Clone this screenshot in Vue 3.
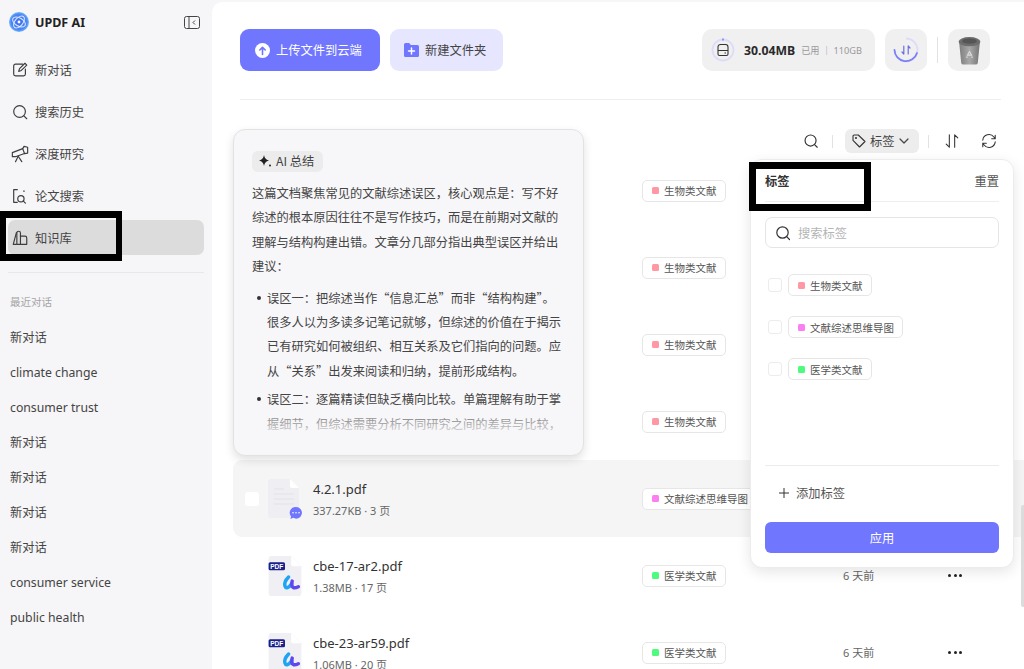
<script setup>
const navItems = [
  { id: 'chat', label: '新对话', paths: ['M13 3.5H5a2 2 0 0 0-2 2v9a2 2 0 0 0 2 2h9a2 2 0 0 0 2-2V9', 'M8.5 11.5l1-3L15.5 2.5l2 2-6 6z'] },
  { id: 'history', label: '搜索历史', paths: ['M9.5 3a6.5 6.5 0 1 0 0 13 6.5 6.5 0 0 0 0-13z', 'M14.3 14.3l3.2 3.2'] },
  { id: 'research', label: '深度研究', paths: ['M1.500 8.500l11.500-4.500 2 5.500-10 3.500H1.500z', 'M13 4l1.500-2.500 4 1v6.500l-3.500 .5', 'M8 12.500L5 18.500', 'M8 12.500L12 18.500'] },
  { id: 'paper', label: '论文搜索', paths: ['M7 3H3v14h4', 'M11 9.500a3.500 3.500 0 1 0 0 7 3.500 3.500 0 0 0 0-7z', 'M13.500 15.500l2.500 2.500', 'M14 4.500h.8'] },
  { id: 'library', label: '知识库', active: true, paths: ['M6 4L2.500 17H6', 'M6.500 17V4.500a2 2 0 0 1 4 0V17z', 'M10.500 8h5a2 2 0 0 1 2 2v7h-7'] }
]

const recents = ['新对话', 'climate change', 'consumer trust', '新对话', '新对话', '新对话', '新对话', 'consumer service', 'public health']

const bio = { name: '生物类文献', color: '#ff98a3' }
const mind = { name: '文献综述思维导图', color: '#fb7ff0' }
const med = { name: '医学类文献', color: '#4efb7c' }
const tagOptions = [bio, mind, med]

const files = [
  { id: 1, tag: bio },
  { id: 2, tag: bio },
  { id: 3, tag: bio },
  { id: 4, tag: bio },
  { id: 5, name: '4.2.1.pdf', meta: '337.27KB · 3 页', tag: mind, kind: 'doc', hover: true },
  { id: 6, name: 'cbe-17-ar2.pdf', meta: '1.38MB · 17 页', tag: med, kind: 'pdf', time: '6 天前' },
  { id: 7, name: 'cbe-23-ar59.pdf', meta: '1.06MB · 20 页', tag: med, kind: 'pdf', time: '6 天前' }
]
</script>

<template>
  <div class="app">
    <aside class="sidebar">
      <div class="brand">
        <svg class="logo" viewBox="0 0 20 20">
          <defs>
            <radialGradient id="logoFill" cx="50%" cy="50%" r="55%">
              <stop offset="0" stop-color="#3f6cf0" />
              <stop offset="0.7" stop-color="#4a86f5" />
              <stop offset="1" stop-color="#7fd0fb" />
            </radialGradient>
          </defs>
          <circle cx="10" cy="10" r="10" fill="url(#logoFill)" />
          <ellipse cx="10" cy="10" rx="7" ry="4" transform="rotate(30 10 10)" fill="none" stroke="#dfeaff" stroke-width="1" />
          <ellipse cx="10" cy="10" rx="7" ry="4" transform="rotate(-50 10 10)" fill="none" stroke="#dfeaff" stroke-width="1" />
          <circle cx="10" cy="10" r="1.400" fill="#fff" />
        </svg>
        <span class="brand-name">UPDF AI</span>
        <svg class="collapse" viewBox="0 0 16 13" fill="none" stroke="#444" stroke-width="1">
          <rect x="0.500" y="0.500" width="15" height="12" rx="2" />
          <path d="M5 0.500v12" />
          <path d="M11 4.500L9 6.500l2 2" />
        </svg>
      </div>

      <nav class="nav">
        <div v-for="item in navItems" :key="item.id" class="nav-item" :class="{ active: item.active }">
          <svg class="nav-icon" viewBox="0 0 20 20" fill="none" stroke="#3d3d3d" stroke-width="1.300" stroke-linecap="round" stroke-linejoin="round">
            <path v-for="d in item.paths" :key="d" :d="d" />
          </svg>
          <span>{{ item.label }}</span>
        </div>
      </nav>

      <div class="side-line"></div>
      <div class="recent-title">最近对话</div>
      <div v-for="(text, i) in recents" :key="i" class="recent-item">{{ text }}</div>
    </aside>

    <main class="main">
      <div class="topbar">
        <div class="top-left">
          <button class="btn-upload">
            <svg width="15" height="15" viewBox="0 0 15 15">
              <circle cx="7.500" cy="7.500" r="7.500" fill="#fff" />
              <path d="M7.500 11.500V4.500M4.800 7l2.700-2.700L10.200 7" fill="none" stroke="#7176ff" stroke-width="1.600" stroke-linecap="round" stroke-linejoin="round" />
            </svg>
            上传文件到云端
          </button>
          <button class="btn-folder">
            <svg width="15" height="14" viewBox="0 0 15 14">
              <path d="M0 1.500A1.500 1.500 0 0 1 1.500 0h3.700l1.600 2h6.700A1.500 1.500 0 0 1 15 3.500v9a1.500 1.500 0 0 1-1.500 1.500h-12A1.500 1.500 0 0 1 0 12.500z" fill="#7176ff" />
              <path d="M7.500 5v6M4.500 8h6" stroke="#fff" stroke-width="1.500" stroke-linecap="round" />
            </svg>
            新建文件夹
          </button>
        </div>
        <div class="top-right">
          <div class="storage">
            <svg width="24" height="24" viewBox="0 0 24 24" fill="none">
              <circle cx="12" cy="12" r="10.500" stroke="#dcdcfa" stroke-width="1.800" />
              <path d="M11.300 1.500h1.400" stroke="#7176ff" stroke-width="1.800" />
              <path d="M9.500 6.500h5a2.500 2.500 0 0 1 2.500 2.500v7a1.500 1.500 0 0 1-1.500 1.500h-7A1.500 1.500 0 0 1 7 16V9a2.500 2.500 0 0 1 2.500-2.500zM7 12.500h10" stroke="#333" stroke-width="1.100" />
              <path d="M13.500 15h1.500" stroke="#333" stroke-width="1.100" />
            </svg>
            <span class="used">30.04MB</span>
            <span class="quota">已用 ｜ 110GB</span>
          </div>
          <div class="tile">
            <svg width="26" height="26" viewBox="0 0 26 26" fill="none">
              <path d="M13 1.500A11.500 11.500 0 1 1 1.500 13" stroke="#dcdcfa" stroke-width="1.800" />
              <path d="M1.500 13A11.500 11.500 0 0 0 24 16" stroke="#7c80f5" stroke-width="1.800" stroke-linecap="round" />
              <path d="M10.800 9v8M10.800 17l-1.800-2M15.200 17V9M15.200 9l1.800 2" stroke="#6a6ee0" stroke-width="1.200" stroke-linecap="round" stroke-linejoin="round" />
            </svg>
          </div>
          <span class="top-sep"></span>
          <div class="tile">
            <svg width="25" height="29" viewBox="0 0 24 28">
              <defs>
                <linearGradient id="binFill" x1="0" x2="1" y1="0" y2="0">
                  <stop offset="0" stop-color="#7e7e7e" />
                  <stop offset="0.5" stop-color="#a8a8a8" />
                  <stop offset="1" stop-color="#757575" />
                </linearGradient>
              </defs>
              <path d="M2 6h20l-2 20a2 2 0 0 1-2 1.500H6A2 2 0 0 1 4 26z" fill="url(#binFill)" />
              <ellipse cx="12" cy="5.500" rx="10.500" ry="4.500" fill="#6d6d6d" />
              <ellipse cx="12" cy="5" rx="7" ry="2.500" fill="#555" />
              <path d="M12 15l2 3.500h-4zM8.500 20.500l2-.2M15.500 20.500l-2-.2" fill="none" stroke="#ddd" stroke-width="1.100" />
            </svg>
          </div>
        </div>
      </div>

      <div class="top-line"></div>

      <div class="toolbar">
        <svg class="tool-icon" viewBox="0 0 18 18" fill="none" stroke="#333" stroke-width="1.300" stroke-linecap="round">
          <circle cx="8.500" cy="8.500" r="6.200" />
          <path d="M13 13l3 3" />
        </svg>
        <span class="tool-sep"></span>
        <div class="tag-filter">
          <svg width="14" height="14" viewBox="0 0 14 14" fill="none" stroke="#333" stroke-width="1.100" stroke-linejoin="round">
            <path d="M1 2.300A1.300 1.300 0 0 1 2.300 1h4L13 7.500 7.500 13 1 6.300z" />
            <circle cx="4" cy="4" r="0.500" />
          </svg>
          <span>标签</span>
          <svg width="10" height="6" viewBox="0 0 10 6" fill="none" stroke="#444" stroke-width="1.200" stroke-linecap="round" stroke-linejoin="round">
            <path d="M1 1l4 4 4-4" />
          </svg>
        </div>
        <span class="tool-sep second"></span>
        <svg class="tool-icon sort" viewBox="0 0 18 18" fill="none" stroke="#333" stroke-width="1.200" stroke-linecap="round" stroke-linejoin="round">
          <path d="M6 2v14M6 16l-3.500-3.500M12 16V2M12 2l3.500 3.500" />
        </svg>
        <svg class="tool-icon" viewBox="0 0 18 18" fill="none" stroke="#333" stroke-width="1.200" stroke-linecap="round" stroke-linejoin="round">
          <path d="M2 8a7 7 0 0 1 12.500-3.500L16 6.500M16 2.500v4h-4" />
          <path d="M16 10a7 7 0 0 1-12.500 3.500L2 11.500M2 15.500v-4h4" />
        </svg>
      </div>

      <div class="file-list">
        <div v-for="file in files" :key="file.id" class="file-row" :class="{ hover: file.hover }">
          <div class="check-cell"><span v-if="file.hover" class="row-check"></span></div>
          <div class="file-cell">
            <svg v-if="file.kind === 'doc'" class="file-icon" viewBox="0 0 34 40">
              <path d="M3 0h19l9 9v27a3 3 0 0 1-3 3H3a3 3 0 0 1-3-3V3a3 3 0 0 1 3-3z" fill="#efeef2" />
              <path d="M22 0l9 9h-7a2 2 0 0 1-2-2z" fill="#fff" />
              <path d="M6 10h10M6 15h20M6 20h20M6 25h20" stroke="#e3e2e6" stroke-width="1" />
              <g transform="translate(-1 0)">
                <path d="M29 28a5.800 5.800 0 1 1-2.800 10.800c-1 .7-2 .9-3 .9.500-.6.800-1.300.9-2.200A5.800 5.800 0 0 1 29 28z" fill="#7176ff" />
                <circle cx="26" cy="33.700" r="0.800" fill="#fff" />
                <circle cx="29" cy="33.700" r="0.800" fill="#fff" />
                <circle cx="32" cy="33.700" r="0.800" fill="#fff" />
              </g>
            </svg>
            <svg v-else-if="file.kind === 'pdf'" class="file-icon" viewBox="0 0 32 39">
              <path d="M3 0h19l10 10v26a3 3 0 0 1-3 3H3a3 3 0 0 1-3-3V3a3 3 0 0 1 3-3z" fill="#f0eff3" />
              <path d="M22 0l10 10h-8a2 2 0 0 1-2-2z" fill="#fff" />
              <rect x="0" y="6" width="16" height="8" rx="1.500" fill="#1a1f8a" />
              <text x="8" y="12.400" class="pdf-mark">PDF</text>
              <path d="M19.500 20.500c-2.500 2.500-4.500 6-3.500 9 .8 2.300 3.500 2 6.500-2.500" fill="none" stroke="#1ea4f2" stroke-width="3.400" stroke-linecap="round" stroke-linejoin="round" />
              <path d="M23 24.500c-.8 3-.5 6 1.500 6.500 1.500.3 3-.3 4.500-1" fill="none" stroke="#5f46ee" stroke-width="3.400" stroke-linecap="round" stroke-linejoin="round" />
            </svg>
            <div v-if="file.name" class="file-text">
              <div class="file-name">{{ file.name }}</div>
              <div class="file-meta">{{ file.meta }}</div>
            </div>
          </div>
          <div class="tag-cell">
            <span class="tag">
              <i class="tag-dot" :style="{ background: file.tag.color }"></i>{{ file.tag.name }}
            </span>
          </div>
          <div class="time-cell">{{ file.time }}</div>
          <div class="more-cell">
            <span v-if="file.time" class="more"><i></i><i></i><i></i></span>
          </div>
        </div>
      </div>

      <section class="summary">
        <div class="summary-chip">
          <svg width="14" height="14" viewBox="0 0 14 14" fill="#222">
            <path d="M6 1c.5 3 1.800 4.600 5 5.500-3.200.9-4.500 2.500-5 5.500-.5-3-1.800-4.600-5-5.500C4.200 5.600 5.500 4 6 1z" />
            <circle cx="12" cy="11.500" r="1" />
          </svg>
          <span>AI 总结</span>
        </div>
        <div class="summary-body">
          <p>这篇文档聚焦常见的文献综述误区，核心观点是：写不好综述的根本原因往往不是写作技巧，而是在前期对文献的理解与结构构建出错。文章分几部分指出典型误区并给出建议：</p>
          <ul>
            <li>误区一：把综述当作“信息汇总”而非“结构构建”。很多人以为多读多记笔记就够，但综述的价值在于揭示已有研究如何被组织、相互关系及它们指向的问题。应从“关系”出发来阅读和归纳，提前形成结构。</li>
            <li>误区二：逐篇精读但缺乏横向比较。单篇理解有助于掌握细节，但综述需要分析不同研究之间的差异与比较，</li>
          </ul>
          <div class="summary-fade"></div>
        </div>
      </section>

      <section class="tag-panel">
        <div class="panel-head">
          <strong>标签</strong>
          <span class="reset">重置</span>
        </div>
        <div class="panel-search">
          <svg width="16" height="16" viewBox="0 0 16 16" fill="none" stroke="#333" stroke-width="1.200" stroke-linecap="round">
            <circle cx="7.500" cy="7.500" r="5.700" />
            <path d="M11.700 11.700l2.800 2.800" />
          </svg>
          <span>搜索标签</span>
        </div>
        <div class="panel-options">
          <div v-for="opt in tagOptions" :key="opt.name" class="panel-option">
            <span class="opt-check"></span>
            <span class="tag">
              <i class="tag-dot" :style="{ background: opt.color }"></i>{{ opt.name }}
            </span>
          </div>
        </div>
        <div class="panel-foot">
          <div class="add-tag">
            <svg width="10" height="10" viewBox="0 0 10 10" stroke="#333" stroke-width="1">
              <path d="M5 0v10M0 5h10" />
            </svg>
            添加标签
          </div>
          <button class="apply">应用</button>
        </div>
      </section>

      <span class="scroll-thumb"></span>
    </main>

    <!-- black marks drawn over the capture -->
    <span class="mark mark-nav"></span>
    <span class="mark mark-panel"></span>
  </div>
</template>

<style>
html,
body {
  margin: 0;
  overflow: hidden;
  background: #f6f5f7;
}
</style>

<style scoped>
.app {
  position: relative;
  display: flex;
  width: 1024px;
  height: 669px;
  overflow: hidden;
  background: #f6f5f7;
  color: #333;
  font-family: "Noto Sans", "Noto Sans CJK SC", sans-serif;
}

/* sidebar */
.sidebar {
  flex: none;
  box-sizing: border-box;
  width: 212px;
  padding: 0 8px;
}

.brand {
  display: flex;
  align-items: center;
  height: 44px;
}

.logo {
  width: 20px;
  height: 20px;
  margin-left: 1px;
}

.brand-name {
  margin-left: 6px;
  font-size: 12.5px;
  font-weight: 700;
  color: #222;
}

.collapse {
  width: 16px;
  height: 13px;
  margin-left: auto;
  margin-right: 4px;
}

.nav {
  display: flex;
  flex-direction: column;
  gap: 7px;
  margin-top: 8px;
}

.nav-item {
  display: flex;
  align-items: center;
  gap: 6px;
  height: 35px;
  padding-left: 3px;
  border-radius: 7px;
  font-size: 12.25px;
  color: #444;
}

.nav-item.active {
  background: #dcdcdc;
}

.nav-icon {
  width: 18px;
  height: 18px;
}

.side-line {
  height: 1px;
  margin-top: 17px;
  background: #e8e7ea;
}

.recent-title {
  margin-top: 21px;
  margin-left: 2px;
  height: 16px;
  line-height: 16px;
  font-size: 10.5px;
  color: #a5a5a5;
}

.recent-item {
  height: 35px;
  margin-left: 2px;
  line-height: 35px;
  font-size: 12.25px;
  color: #444;
}

.recent-title + .recent-item {
  margin-top: 10px;
}

/* main area */
.main {
  position: relative;
  flex: 1;
  box-sizing: border-box;
  height: 667px;
  margin-top: 2px;
  padding: 27px 23px 0 28px;
  overflow: hidden;
  background: #fff;
  border-radius: 10px 0 0 0;
}

.topbar {
  display: flex;
  justify-content: space-between;
  height: 42px;
}

.top-left,
.top-right {
  display: flex;
  align-items: center;
  gap: 10px;
}

.top-right {
  margin-right: 11px;
}

.btn-upload,
.btn-folder {
  display: flex;
  align-items: center;
  height: 42px;
  border: 0;
  border-radius: 9px;
  font-family: inherit;
  font-size: 12.25px;
}

.btn-upload {
  gap: 6px;
  width: 140px;
  padding: 0 0 0 15px;
  background: #7176ff;
  color: #fff;
}

.btn-folder {
  gap: 6px;
  width: 113px;
  padding: 0 0 0 14px;
  background: #e6e6ff;
  color: #444;
}

.storage {
  display: flex;
  align-items: center;
  box-sizing: border-box;
  width: 173px;
  height: 42px;
  padding-left: 9px;
  border-radius: 10px;
  background: #f1f0f1;
}

.used {
  margin-left: 9px;
  font-size: 12.25px;
  font-weight: 700;
  color: #2a2a2a;
}

.quota {
  margin-left: 6px;
  font-size: 9.2px;
  color: #9a9a9a;
}

.tile {
  display: flex;
  align-items: center;
  justify-content: center;
  width: 42px;
  height: 42px;
  border-radius: 10px;
  background: #f1f0f1;
}

.top-sep {
  width: 1px;
  height: 26px;
  background: #e2e2e2;
}

.top-line {
  height: 1px;
  margin-top: 28px;
  background: #eeeeee;
}

.toolbar {
  display: flex;
  align-items: center;
  justify-content: flex-end;
  height: 24px;
  margin-top: 29px;
  padding-right: 4px;
}

.tool-icon {
  width: 16px;
  height: 16px;
}

.tool-sep {
  width: 1px;
  height: 13px;
  margin: 0 12px 0 13px;
  background: #e2e2e2;
}

.tool-sep.second {
  margin: 0 15px 0 9px;
}

.tool-icon.sort {
  margin-right: 21px;
}

.tag-filter {
  display: flex;
  align-items: center;
  gap: 4px;
  box-sizing: border-box;
  width: 74px;
  height: 24px;
  padding-left: 7px;
  border-radius: 6px;
  background: #ededed;
  font-size: 12.25px;
  color: #444;
}

.file-list {
  margin-top: -1px;
  margin-left: -7px;
  margin-right: -23px;
}

.file-row {
  display: grid;
  grid-template-columns: 35px 374px 201px 105px 1fr;
  align-items: center;
  height: 77px;
  border-radius: 9px 0 0 9px;
}

.file-row.hover {
  background: #f5f5f6;
}

.check-cell {
  display: flex;
  padding-left: 12px;
}

.row-check {
  width: 14px;
  height: 14px;
  border-radius: 3px;
  background: #fff;
}

.file-cell {
  display: flex;
  align-items: center;
  gap: 11px;
}

.file-icon {
  flex: none;
  width: 34px;
  height: 40px;
  overflow: visible;
}

.pdf-mark {
  fill: #fff;
  font-family: "Liberation Sans", sans-serif;
  font-size: 6.400px;
  font-weight: 700;
  text-anchor: middle;
}

.file-name {
  font-size: 13px;
  line-height: 20px;
  color: #333;
}

.file-meta {
  margin-top: 4px;
  font-size: 11px;
  line-height: 16px;
  color: #666;
}

.tag {
  display: inline-flex;
  align-items: center;
  gap: 5px;
  box-sizing: border-box;
  height: 22px;
  padding: 0 8px 0 9px;
  border: 1px solid #e6e6e6;
  border-radius: 5px;
  background: #fff;
  font-size: 10.500px;
  white-space: nowrap;
  color: #555;
}

.tag-dot {
  width: 7px;
  height: 7px;
  border-radius: 1.500px;
}

.tag-cell {
  display: flex;
}

.time-cell {
  margin-top: -1px;
  font-size: 11px;
  color: #666;
}

.more {
  display: flex;
  gap: 2.500px;
  margin-top: -1px;
}

.more i {
  width: 3px;
  height: 3px;
  border-radius: 50%;
  background: #222;
}

/* ai summary popover */
.summary {
  position: absolute;
  top: 127px;
  left: 21px;
  box-sizing: border-box;
  width: 351px;
  height: 327px;
  padding: 19px 21px 20px 18px;
  border: 1px solid #e2e2e2;
  border-radius: 12px;
  background: #f7f6f8;
  box-shadow: 0 4px 10px rgba(0, 0, 0, 0.12);
  font-family: "Noto Sans CJK SC", sans-serif;
}

.summary-chip {
  display: inline-flex;
  align-items: center;
  gap: 4px;
  box-sizing: border-box;
  width: 71px;
  height: 21px;
  padding-left: 6px;
  border-radius: 6px;
  background: #ececed;
  font-size: 12.250px;
  color: #444;
}

.summary-body {
  position: relative;
  height: 258px;
  margin-top: 8px;
  overflow: hidden;
  font-size: 12.250px;
  line-height: 24.400px;
  color: #444;
}

.summary-body p {
  margin: 0;
}

.summary-body ul {
  margin: 7px 0 0;
  padding-left: 15px;
  list-style: none;
}

.summary-body li {
  position: relative;
  margin-bottom: 4px;
}

.summary-body li::before {
  content: "";
  position: absolute;
  top: 10px;
  left: -10px;
  width: 4px;
  height: 4px;
  border-radius: 50%;
  background: #333;
}

.summary-fade {
  position: absolute;
  right: 0;
  bottom: 0;
  left: 0;
  height: 36px;
  background: linear-gradient(rgba(247, 246, 248, 0), #f7f6f8);
}

/* tag filter panel */
.tag-panel {
  position: absolute;
  top: 157px;
  left: 538px;
  display: flex;
  flex-direction: column;
  box-sizing: border-box;
  width: 264px;
  height: 409px;
  padding: 0 14px 14px;
  border: 1px solid #ececec;
  border-radius: 12px;
  background: #fff;
  box-shadow: 0 4px 14px rgba(0, 0, 0, 0.1);
}

.panel-head {
  display: flex;
  align-items: center;
  justify-content: space-between;
  height: 41px;
  border-bottom: 1px solid #eeeeee;
  font-size: 12.250px;
  color: #333;
}

.panel-head strong {
  font-weight: 700;
}

.reset {
  font-size: 12.250px;
  color: #555;
}

.panel-search {
  display: flex;
  align-items: center;
  gap: 7px;
  box-sizing: border-box;
  height: 31px;
  margin-top: 15px;
  padding-left: 9px;
  border: 1px solid #e5e5e5;
  border-radius: 7px;
  font-size: 12.250px;
  color: #b5b5b5;
}

.panel-options {
  display: flex;
  flex-direction: column;
  gap: 20px;
  margin-top: 26px;
  padding-left: 3px;
}

.panel-option {
  display: flex;
  align-items: center;
  gap: 6px;
}

.opt-check {
  width: 12px;
  height: 12px;
  border: 1px solid #ececec;
  border-radius: 3px;
}

.panel-foot {
  margin-top: auto;
  border-top: 1px solid #ececec;
}

.add-tag {
  display: flex;
  align-items: center;
  gap: 7px;
  box-sizing: border-box;
  height: 56px;
  padding: 0 0 2px 14px;
  font-size: 12.250px;
  color: #555;
}

.apply {
  display: block;
  width: 100%;
  height: 31px;
  border: 0;
  border-radius: 6px;
  background: #7176ff;
  color: #fff;
  font-family: inherit;
  font-size: 12.250px;
}

.scroll-thumb {
  position: absolute;
  top: 503px;
  right: 0;
  width: 3px;
  height: 102px;
  border-radius: 2px 0 0 2px;
  background: #dcdcdc;
}

/* black annotation boxes */
.mark {
  position: absolute;
  box-sizing: border-box;
  border: 7px solid #000;
}

.mark-nav {
  top: 211px;
  left: 0;
  width: 122px;
  height: 50px;
  border-width: 7px 6px;
}

.mark-panel {
  top: 162px;
  left: 749px;
  width: 122px;
  height: 49px;
}
</style>
